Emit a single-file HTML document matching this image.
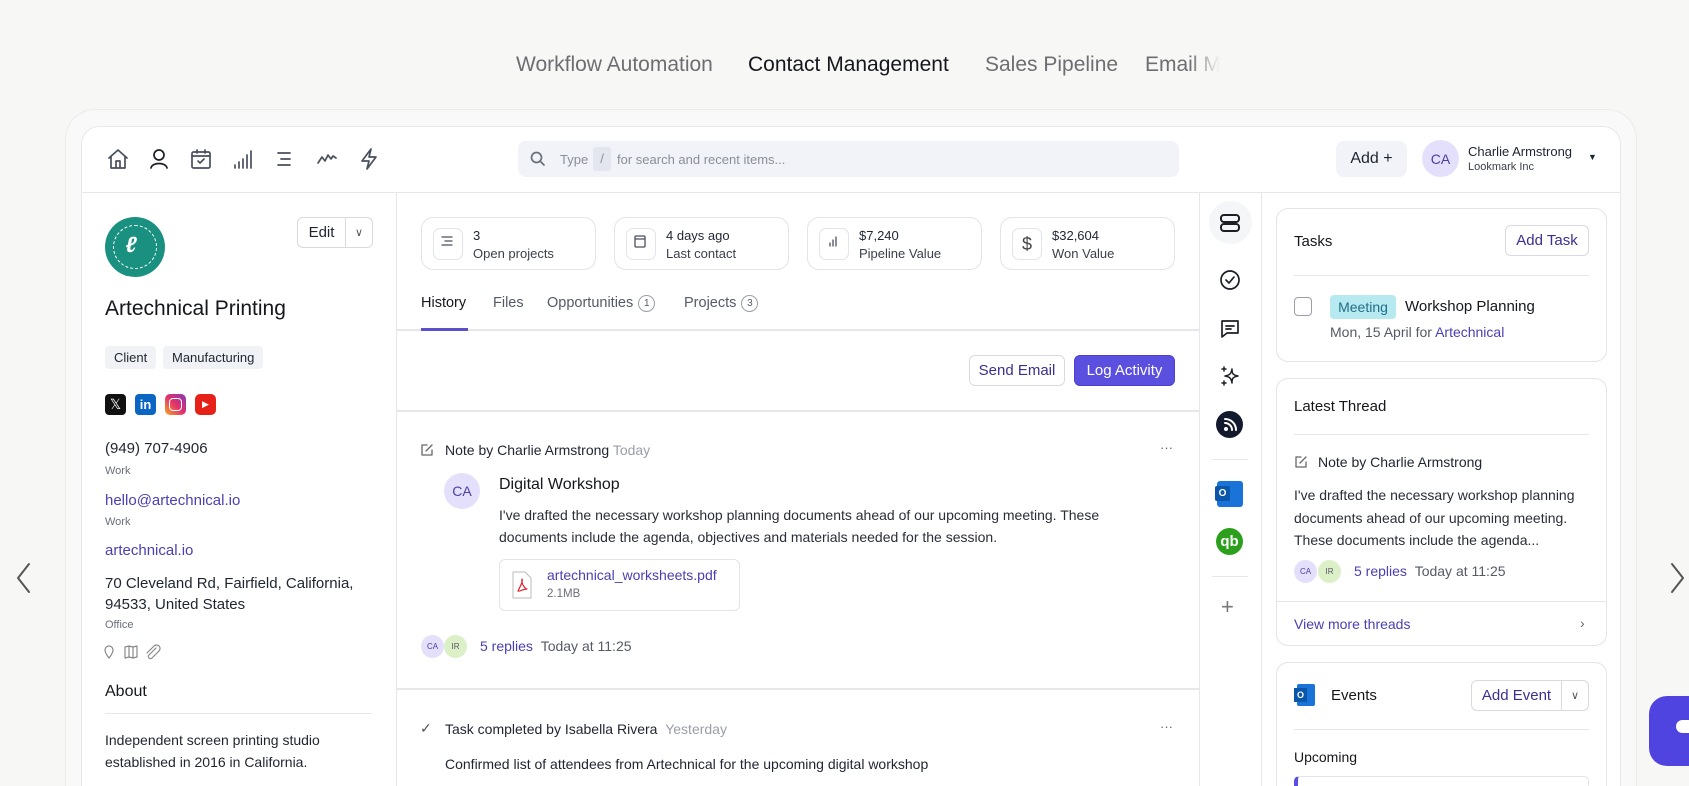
<!DOCTYPE html>
<html><head><meta charset="utf-8">
<style>
*{box-sizing:border-box;margin:0;padding:0}
html,body{width:1689px;height:786px;overflow:hidden}
body{background:#f7f7f6;font-family:"Liberation Sans",sans-serif;color:#1f2430}
#w{position:relative;width:1689px;height:786px;overflow:hidden}
.a{position:absolute;white-space:nowrap}
.nav{font-size:21px;color:#6e6e72;top:53px}
.outer{position:absolute;left:65px;top:109px;width:1572px;height:677px;border:1px solid #ebebeb;border-bottom:none;border-radius:30px 30px 0 0;background:#f9f9f9}
.inner{position:absolute;left:81px;top:126px;width:1540px;height:660px;border:1px solid #e8e8ec;border-bottom:none;border-radius:18px 18px 0 0;background:#fff}
.hl{position:absolute;background:#e6e7eb}
svg.i{position:absolute;fill:none;stroke:#4a4f5c;stroke-width:1.7;stroke-linecap:round;stroke-linejoin:round}
.btn{position:absolute;border:1px solid #d8dae0;border-radius:6px;background:#fff;font-size:15px;display:flex;align-items:center;justify-content:center}
.card{position:absolute;border:1px solid #e2e4ea;border-radius:12px;background:#fff}
.stat{position:absolute;top:217px;width:175px;height:53px;border:1px solid #e2e4ea;border-radius:12px}
.stat .ib{position:absolute;left:11px;top:10px;width:30px;height:32px;border:1px solid #e2e4ea;border-radius:7px}
.stat .t1{position:absolute;left:51px;top:10px;font-size:13px}
.stat .t2{position:absolute;left:51px;top:28px;font-size:13px;color:#3a3f4a}
.tag{position:absolute;top:346px;height:23px;background:#f0f2f6;border-radius:4px;font-size:13px;padding:4px 9px}
.sm{font-size:11px;color:#6b6f78}
.lnk{color:#4a3fb0}
.av{position:absolute;border-radius:50%;display:flex;align-items:center;justify-content:center;color:#4a3fa0}
.badge{display:inline-block;width:17px;height:17px;border:1px solid #9a9ea8;border-radius:50%;font-size:10px;text-align:center;line-height:15px;margin-left:5px;vertical-align:1px}
</style></head><body><div id="w">
<div class="a nav" style="left:516px">Workflow Automation</div>
<div class="a nav" style="left:748px;color:#15171c">Contact Management</div>
<div class="a nav" style="left:985px">Sales Pipeline</div>
<div class="a nav" style="left:1145px;width:75px;overflow:hidden;-webkit-mask-image:linear-gradient(90deg,#000 60%,transparent)">Email Marketing</div>

<div class="outer"></div>
<div class="inner"></div>

<svg class="i" style="left:14px;top:562px;stroke:#555;stroke-width:2" width="20" height="32"><path d="M15 2 L4 16 L15 30"/></svg>
<svg class="i" style="left:1668px;top:562px;stroke:#555;stroke-width:2" width="20" height="32"><path d="M4 2 L15 16 L4 30"/></svg>

<svg class="i" style="left:107px;top:148px" width="22" height="22" viewBox="0 0 22 22"><path d="M2 10 L11 2 L20 10 M4 8 V20 H18 V8 M9 20 V13 H13 V20"/></svg>
<svg class="i" style="left:148px;top:148px;stroke:#1c1f26" width="22" height="22" viewBox="0 0 22 22"><circle cx="11" cy="7" r="5"/><path d="M3 20 C4 14 18 14 19 20"/></svg>
<svg class="i" style="left:190px;top:148px" width="22" height="22" viewBox="0 0 22 22"><rect x="2" y="4" width="18" height="16" rx="1.5"/><path d="M2 8 H20 M7 2 V5 M15 2 V5 M8 13 L10 15 L14 11"/></svg>
<svg class="i" style="left:232px;top:148px" width="22" height="22" viewBox="0 0 22 22"><path d="M3 20V17 M7 20V14 M11 20V11 M15 20V7 M19 20V3"/></svg>
<svg class="i" style="left:274px;top:148px" width="22" height="22" viewBox="0 0 22 22"><path d="M4 5 H16 M7 11 H16 M4 17 H16"/></svg>
<svg class="i" style="left:316px;top:148px" width="22" height="22" viewBox="0 0 22 22"><path d="M2 15 L6 9 L9 13 L12 7 L15 11 L17 8 L20 10"/></svg>
<svg class="i" style="left:358px;top:147px" width="22" height="24" viewBox="0 0 22 24"><path d="M13 2 L4 14 H11 L9 22 L18 10 H11 Z"/></svg>

<div style="position:absolute;left:518px;top:141px;width:661px;height:36px;background:#f1f3f8;border-radius:8px"></div>
<svg class="i" style="left:530px;top:151px;stroke:#6b6f78" width="16" height="16"><circle cx="6.5" cy="6.5" r="5"/><path d="M10 10 L14 14"/></svg>
<div class="a" style="left:560px;top:152px;font-size:13px;color:#8a8e98">Type</div>
<div style="position:absolute;left:593px;top:147px;width:18px;height:24px;background:#e3e6ee;border-radius:3px;color:#8a8e98;font-size:13px;text-align:center;line-height:24px">/</div>
<div class="a" style="left:617px;top:152px;font-size:13px;color:#8a8e98">for search and recent items...</div>

<div style="position:absolute;left:1336px;top:141px;width:71px;height:36px;background:#f1f3f8;border-radius:8px;font-size:16px;text-align:center;line-height:36px">Add +</div>
<div class="av" style="left:1422px;top:140px;width:37px;height:37px;background:#e4e0fb;font-size:14px">CA</div>
<div class="a" style="left:1468px;top:144px;font-size:13px">Charlie Armstrong</div>
<div class="a" style="left:1468px;top:161px;font-size:11px;color:#3a3f4a">Lookmark Inc</div>
<div class="a" style="left:1588px;top:152px;font-size:9px">▼</div>

<div class="hl" style="left:81px;top:192px;width:1540px;height:1px"></div>
<div class="hl" style="left:396px;top:192px;width:1px;height:594px"></div>
<div class="hl" style="left:1199px;top:192px;width:1px;height:594px"></div>
<div class="hl" style="left:1261px;top:192px;width:1px;height:594px"></div>

<div style="position:absolute;left:105px;top:217px;width:60px;height:60px;border-radius:50%;background:#1a9180"></div>
<div style="position:absolute;left:113px;top:225px;width:44px;height:44px;border-radius:50%;border:1.5px dashed #fff"></div>
<div class="a" style="left:126px;top:232px;color:#fff;font-weight:bold;font-size:22px;transform:skewX(-10deg)">ℓ</div>
<div class="btn" style="left:297px;top:217px;width:76px;height:31px"><span style="width:48px;text-align:center;border-right:1px solid #d8dae0;line-height:29px">Edit</span><span style="flex:1;text-align:center;font-size:11px;color:#555">∨</span></div>
<div class="a" style="left:105px;top:297px;font-size:21px;color:#15171c">Artechnical Printing</div>
<div class="tag" style="left:105px">Client</div>
<div class="tag" style="left:163px">Manufacturing</div>
<div style="position:absolute;left:105px;top:394px;width:21px;height:21px;background:#111;border-radius:4px;color:#fff;font-size:14px;text-align:center;line-height:21px">𝕏</div>
<div style="position:absolute;left:135px;top:394px;width:21px;height:21px;background:#0a66c2;border-radius:4px;color:#fff;font-size:13px;font-weight:bold;text-align:center;line-height:21px">in</div>
<div style="position:absolute;left:165px;top:394px;width:21px;height:21px;background:linear-gradient(45deg,#f9a825,#e1306c,#833ab4);border-radius:5px"><div style="margin:4px;width:13px;height:13px;border:1.6px solid #fff;border-radius:4px"></div></div>
<div style="position:absolute;left:195px;top:394px;width:21px;height:21px;background:#e62117;border-radius:5px;color:#fff;font-size:9px;text-align:center;line-height:21px">▶</div>
<div class="a" style="left:105px;top:440px;font-size:15px">(949) 707-4906</div>
<div class="a sm" style="left:105px;top:465px">Work</div>
<div class="a lnk" style="left:105px;top:492px;font-size:15px">hello@artechnical.io</div>
<div class="a sm" style="left:105px;top:516px">Work</div>
<div class="a lnk" style="left:105px;top:542px;font-size:15px">artechnical.io</div>
<div class="a" style="left:105px;top:573px;font-size:15px;line-height:21px">70 Cleveland Rd, Fairfield, California,<br>94533, United States</div>
<div class="a sm" style="left:105px;top:619px">Office</div>
<svg class="i" style="left:104px;top:644px;stroke:#888;stroke-width:1.2" width="60" height="16"><path d="M5 14 C1 9 1 7 1 6 A4 4 0 0 1 9 6 C9 7 9 9 5 14Z"/><path d="M21 3 L25 2 L29 3 L33 2 V13 L29 14 L25 13 L21 14Z M25 2V13 M29 3V14"/><path d="M52 4 L45 11 A2 2 0 0 0 48 14 L55 7 A3.5 3.5 0 0 0 50 2 L43 9"/></svg>
<div class="a" style="left:105px;top:683px;font-size:16px;color:#15171c">About</div>
<div class="hl" style="left:105px;top:713px;width:267px;height:1px"></div>
<div class="a" style="left:105px;top:729px;font-size:14px;line-height:22px">Independent screen printing studio<br>established in 2016 in California.</div>

<div class="stat" style="left:421px"><div class="ib"></div><div class="t1">3</div><div class="t2">Open projects</div></div>
<div class="stat" style="left:614px"><div class="ib"></div><div class="t1">4 days ago</div><div class="t2">Last contact</div></div>
<div class="stat" style="left:807px"><div class="ib"></div><div class="t1">$7,240</div><div class="t2">Pipeline Value</div></div>
<div class="stat" style="left:1000px"><div class="ib" style="text-align:center;line-height:30px;font-size:18px;color:#444">$</div><div class="t1">$32,604</div><div class="t2">Won Value</div></div>
<svg class="i" style="left:440px;top:234px;stroke-width:1.3" width="14" height="14"><path d="M2 3H12 M5 7H12 M2 11H12"/></svg>
<svg class="i" style="left:633px;top:234px;stroke-width:1.3" width="14" height="14"><rect x="2" y="2" width="10" height="11" rx="1"/><path d="M2 5H12"/></svg>
<svg class="i" style="left:826px;top:234px;stroke-width:1.3" width="14" height="14"><path d="M4 12V9 M7 12V6 M10 12V3"/></svg>

<div class="a" style="left:421px;top:295px;font-size:14.5px;color:#15171c">History</div>
<div class="a" style="left:493px;top:295px;font-size:14.5px;color:#555a66">Files</div>
<div class="a" style="left:547px;top:295px;font-size:14.5px;color:#555a66">Opportunities<span class="badge">1</span></div>
<div class="a" style="left:684px;top:295px;font-size:14.5px;color:#555a66">Projects<span class="badge">3</span></div>
<div class="hl" style="left:397px;top:329px;width:802px;height:2px"></div>
<div style="position:absolute;left:421px;top:328px;width:47px;height:3px;background:#5b50c9"></div>

<div class="btn lnk" style="left:969px;top:355px;width:96px;height:31px;color:#3a3090">Send Email</div>
<div class="btn" style="left:1074px;top:355px;width:101px;height:31px;background:#5b4fe0;border-color:#4a3fcf;color:#fff">Log Activity</div>
<div class="hl" style="left:397px;top:410px;width:802px;height:2px"></div>

<svg class="i" style="left:420px;top:443px;stroke-width:1.3;stroke:#666" width="14" height="14"><path d="M7 2H2V12H12V7 M6 8 L12 2"/></svg>
<div class="a" style="left:445px;top:442px;font-size:14px">Note by Charlie Armstrong <span style="color:#9a9ea8">Today</span></div>
<div class="a" style="left:1160px;top:440px;font-size:13px;color:#666">···</div>
<div class="av" style="left:444px;top:473px;width:36px;height:36px;background:#e4e0fb;font-size:14px">CA</div>
<div class="a" style="left:499px;top:476px;font-size:16px;color:#15171c">Digital Workshop</div>
<div class="a" style="left:499px;top:504px;font-size:14px;line-height:22px;color:#2a2e38">I've drafted the necessary workshop planning documents ahead of our upcoming meeting. These<br>documents include the agenda, objectives and materials needed for the session.</div>
<div class="card" style="left:499px;top:559px;width:241px;height:52px;border-radius:6px"></div>
<svg class="i" style="left:512px;top:571px;stroke:#bbb;stroke-width:1" width="20" height="28"><path d="M1 1H13L19 7V27H1Z"/><path d="M6 20 C9 14 11 10 10 8 C9 14 14 18 15 18 C11 18 7 21 6 20Z" stroke="#d23" stroke-width="1.2"/></svg>
<div class="a lnk" style="left:547px;top:567px;font-size:14px">artechnical_worksheets.pdf</div>
<div class="a" style="left:547px;top:588px;font-size:11.5px;color:#6b6f78">2.1MB</div>
<div class="av" style="left:421px;top:635px;width:23px;height:23px;background:#e4e0fb;font-size:8px">CA</div>
<div class="av" style="left:444px;top:635px;width:23px;height:23px;background:#dcf0c8;font-size:8px;color:#556">IR</div>
<div class="a" style="left:480px;top:638px;font-size:14px"><span class="lnk">5 replies</span> <span style="color:#555a66">&nbsp;Today at 11:25</span></div>
<div class="hl" style="left:397px;top:688px;width:802px;height:2px"></div>
<div class="a" style="left:420px;top:720px;font-size:14px;color:#555">✓</div>
<div class="a" style="left:445px;top:721px;font-size:14px">Task completed by Isabella Rivera <span style="color:#9a9ea8">&nbsp;Yesterday</span></div>
<div class="a" style="left:1160px;top:719px;font-size:13px;color:#666">···</div>
<div class="a" style="left:445px;top:756px;font-size:14px">Confirmed list of attendees from Artechnical for the upcoming digital workshop</div>

<div style="position:absolute;left:1209px;top:201px;width:43px;height:43px;border-radius:50%;background:#f5f6f8"></div>
<svg class="i" style="left:1219px;top:212px;stroke:#1c1f26;stroke-width:2" width="22" height="22"><rect x="2" y="3" width="18" height="7" rx="3"/><rect x="2" y="12" width="18" height="7" rx="3"/></svg>
<svg class="i" style="left:1219px;top:269px;stroke:#1c1f26;stroke-width:1.7" width="22" height="22"><circle cx="11" cy="11" r="9"/><path d="M7 11 L10 14 L15 8"/></svg>
<svg class="i" style="left:1219px;top:318px;stroke:#1c1f26;stroke-width:1.7" width="22" height="22"><path d="M3 3H19V15H8L3 19Z M7 8H15 M7 11H12"/></svg>
<svg class="i" style="left:1219px;top:365px;stroke:#1c1f26;stroke-width:1.5" width="22" height="22"><path d="M13 4 C13 9 14 10 19 11 C14 12 13 13 13 18 C12 13 11 12 6 11 C11 10 12 9 13 4Z M5 2V6 M3 4H7 M5 16V20 M3 18H7"/></svg>
<div style="position:absolute;left:1216px;top:411px;width:27px;height:27px;border-radius:50%;background:#141a2e"></div>
<svg class="i" style="left:1216px;top:411px;stroke:#fff;stroke-width:2" width="27" height="27"><path d="M9 12 A7 7 0 0 1 16 19 M9 8 A11 11 0 0 1 20 19"/><circle cx="10" cy="18" r="1" fill="#fff"/></svg>
<div class="hl" style="left:1212px;top:459px;width:36px;height:1px"></div>
<div style="position:absolute;left:1217px;top:481px;width:26px;height:26px;background:#1a73d8;border-radius:3px"></div>
<div style="position:absolute;left:1215px;top:486px;width:15px;height:15px;background:#0a56a8;border-radius:2px;color:#fff;font-size:10px;text-align:center;line-height:15px;font-weight:bold">O</div>
<div style="position:absolute;left:1216px;top:528px;width:27px;height:27px;border-radius:50%;background:#2ca01c;color:#fff;font-size:15px;font-weight:bold;text-align:center;line-height:27px">qb</div>
<div class="hl" style="left:1212px;top:576px;width:36px;height:1px"></div>
<div class="a" style="left:1221px;top:594px;font-size:22px;color:#777;font-weight:300">+</div>

<div class="card" style="left:1276px;top:208px;width:331px;height:154px"></div>
<div class="a" style="left:1294px;top:233px;font-size:15px;color:#15171c">Tasks</div>
<div class="btn" style="left:1505px;top:225px;width:84px;height:31px;color:#3a3090">Add Task</div>
<div class="hl" style="left:1294px;top:275px;width:295px;height:1px"></div>
<div style="position:absolute;left:1294px;top:297px;width:18px;height:19px;border:1.5px solid #9a9ea8;border-radius:4px"></div>
<div style="position:absolute;left:1330px;top:295px;width:66px;height:24px;background:#b6e9f0;border-radius:4px;color:#1f6f86;font-size:14px;text-align:center;line-height:24px">Meeting</div>
<div class="a" style="left:1405px;top:298px;font-size:15px;color:#15171c">Workshop Planning</div>
<div class="a" style="left:1330px;top:324px;font-size:14px;color:#555a66">Mon, 15 April for <span class="lnk">Artechnical</span></div>

<div class="card" style="left:1276px;top:378px;width:331px;height:268px"></div>
<div class="a" style="left:1294px;top:398px;font-size:15px;color:#15171c">Latest Thread</div>
<div class="hl" style="left:1294px;top:434px;width:295px;height:1px"></div>
<svg class="i" style="left:1294px;top:455px;stroke-width:1.3;stroke:#666" width="14" height="14"><path d="M7 2H2V12H12V7 M6 8 L12 2"/></svg>
<div class="a" style="left:1318px;top:454px;font-size:14px">Note by Charlie Armstrong</div>
<div class="a" style="left:1294px;top:484px;font-size:14px;line-height:22.5px;color:#2a2e38">I've drafted the necessary workshop planning<br>documents ahead of our upcoming meeting.<br>These documents include the agenda...</div>
<div class="av" style="left:1294px;top:560px;width:23px;height:23px;background:#e4e0fb;font-size:8px">CA</div>
<div class="av" style="left:1318px;top:560px;width:23px;height:23px;background:#dcf0c8;font-size:8px;color:#556">IR</div>
<div class="a" style="left:1354px;top:563px;font-size:14px"><span class="lnk">5 replies</span> <span style="color:#555a66">&nbsp;Today at 11:25</span></div>
<div class="hl" style="left:1277px;top:601px;width:329px;height:1px"></div>
<div class="a lnk" style="left:1294px;top:616px;font-size:14px">View more threads</div>
<div class="a" style="left:1580px;top:615px;font-size:14px;color:#666">›</div>

<div class="card" style="left:1276px;top:662px;width:331px;height:124px;border-bottom:none;border-radius:12px 12px 0 0"></div>
<div style="position:absolute;left:1297px;top:684px;width:18px;height:22px;background:#1a73d8;border-radius:2px"></div>
<div style="position:absolute;left:1294px;top:688px;width:13px;height:14px;background:#0a56a8;color:#fff;font-size:9px;text-align:center;line-height:14px;font-weight:bold">O</div>
<div class="a" style="left:1331px;top:687px;font-size:15px;color:#15171c">Events</div>
<div class="btn" style="left:1471px;top:680px;width:118px;height:31px;color:#3a3090"><span style="width:90px;text-align:center;border-right:1px solid #d8dae0;line-height:29px">Add Event</span><span style="flex:1;text-align:center;font-size:11px;color:#555">∨</span></div>
<div class="hl" style="left:1294px;top:729px;width:295px;height:1px"></div>
<div class="a" style="left:1294px;top:749px;font-size:14px;color:#15171c">Upcoming</div>
<div style="position:absolute;left:1294px;top:776px;width:295px;height:10px;border:1px solid #e2e4ea;border-bottom:none;border-left:4px solid #5b4fe0;border-radius:5px 5px 0 0"></div>

<div style="position:absolute;left:1649px;top:696px;width:40px;height:70px;background:#4f44e0;border-radius:18px 0 0 18px"></div>
<div style="position:absolute;left:1676px;top:720px;width:13px;height:13px;background:#fff;border-radius:7px 0 0 7px"></div>
</div></body></html>
